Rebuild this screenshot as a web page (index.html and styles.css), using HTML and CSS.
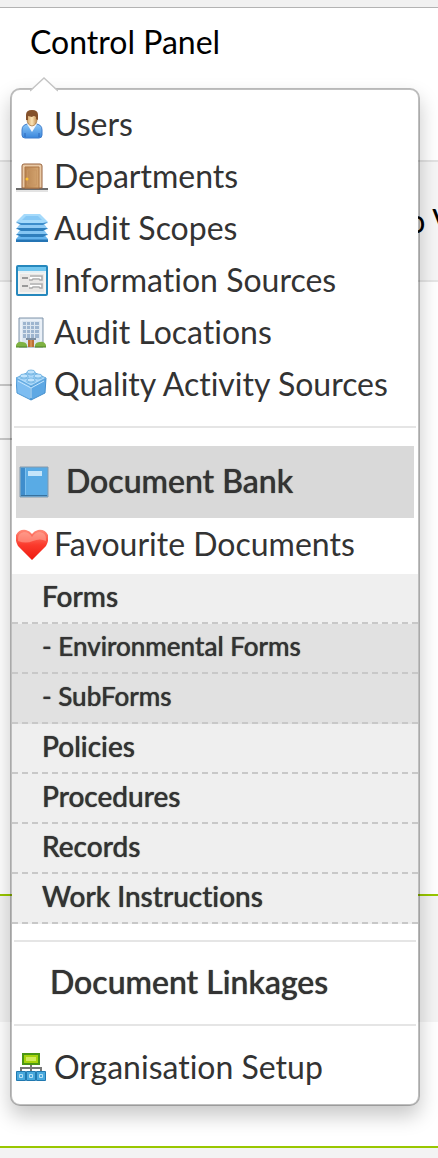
FILE: index.html
```html
<!DOCTYPE html>
<html lang="en">
<head>
  <meta charset="UTF-8">
  <meta name="viewport" content="width=device-width, initial-scale=1.0">
  <title>Control Panel</title>
  <link rel="stylesheet" href="styles.css">
</head>
<body>
  <div class="topbar"></div>
  <header class="navbar">
    <div class="dropdown">
      <a class="nav-link" href="#">Control Panel</a>
      <nav class="menu">
        <svg class="caret" viewBox="0 0 28 15"><path d="M0 14.500L14 1l14 13.500z" fill="#fff"/><path d="M0 14L14 1l14 13" fill="none" stroke="#c4c4c4" stroke-width="1.400"/></svg>
        <ul class="menu-group">
          <li><a class="item" href="#">
            <svg class="icon" viewBox="0 0 32 32">
              <defs>
                <linearGradient id="blue" x1="0" y1="0" x2="0" y2="1"><stop offset="0" stop-color="#8cc8f8"/><stop offset="1" stop-color="#3a86dc"/></linearGradient>
                <linearGradient id="wood" x1="0" y1="0" x2="1" y2="0"><stop offset="0" stop-color="#b98552"/><stop offset="1" stop-color="#d5a671"/></linearGradient>
                <linearGradient id="red" x1="0" y1="0" x2="0" y2="1"><stop offset="0" stop-color="#ff8a78"/><stop offset=".5" stop-color="#fb3a2c"/><stop offset="1" stop-color="#ee1a10"/></linearGradient>
                <linearGradient id="skin" x1="0" y1="0" x2="1" y2="0"><stop offset="0" stop-color="#d3a268"/><stop offset=".5" stop-color="#fbe3b4"/><stop offset="1" stop-color="#c08a4c"/></linearGradient>
              </defs>
              <path d="M6 26v-5q0-6 7-6h6q7 0 7 6v5q0 3-3 3H9q-3 0-3-3z" fill="url(#blue)" stroke="#3f7ccb"/>
              <path d="M9 28v-4M23 28v-4" stroke="#2c68bc" fill="none"/>
              <path d="M11 15h10l-5 8z" fill="#f6f8fc"/>
              <path d="M11 7q0-5 5-5t5 5v3q0 6-5 7-5-1-5-7z" fill="url(#skin)" stroke="#a87840" stroke-width=".8"/>
              <path d="M10 11V6q0-5 6-5t6 5v5l-2-1V8q-2-2-4 0l-4-1v4z" fill="#84512b"/>
            </svg>
            <span>Users</span></a></li>
          <li><a class="item" href="#">
            <svg class="icon" viewBox="0 0 32 32">
              <path d="M0 28h32" stroke="#6c6c6c" stroke-width="2"/>
              <path d="M0 30h32" stroke="#c8c8c8"/>
              <path d="M6 27V5q0-2 2-2h16q2 0 2 2v22z" fill="#e9c9a5" stroke="#98633d"/>
              <path d="M9 27V6h14v21z" fill="url(#wood)" stroke="#ad7747"/>
              <path d="M11.500 9h9v15h-9z" fill="none" stroke="#c89563" stroke-width=".8"/>
              <circle cx="11" cy="18" r="1.500" fill="#ffc330"/>
            </svg>
            <span>Departments</span></a></li>
          <li><a class="item" href="#">
            <svg class="icon" viewBox="0 0 32 32">
              <path d="M7 18h18l7 8v2H0v-2z" fill="#65b4ed"/><path d="M0 26.500h32V29H0z" fill="#2474b4"/>
              <path d="M4 17h24l4 5-4 1H4l-4-1z" fill="#84c5f2"/><path d="M0 21h32l-5 3H5z" fill="#2f7fbd"/>
              <path d="M4 11h24l4 5-4 1H4l-4-1z" fill="#90cbf5"/><path d="M0 15h32l-5 3H5z" fill="#2f7fbd"/>
              <path d="M4 8h24l4 2-4 1H4l-4-1z" fill="#98d0f7"/><path d="M0 9h32l-5 3H5z" fill="#3d8dcb"/>
              <path d="M8 1h16l8 8-5 1H5L0 9z" fill="#a5dafb"/><path d="M10 3h12l4 4H6z" fill="#86c8f5"/>
            </svg>
            <span>Audit Scopes</span></a></li>
          <li><a class="item" href="#">
            <svg class="icon" viewBox="0 0 32 32">
              <rect x="1" y="1" width="30" height="29" rx="1" fill="#f4f4f2" stroke="#2688bd" stroke-width="2"/>
              <path d="M2 2h28v4H2z" fill="#73c7ef"/><path d="M3 7h26" stroke="#d4edf8"/>
              <path d="M4 9h24v18H4z" fill="#e9e7e5"/>
              <path d="M6 13h6M6 21h6" stroke="#999" stroke-width="2"/>
              <path d="M14 10h12v5H14zM14 18h12v5H14z" fill="#fff"/><path d="M13 15h3l1-1h6l1 1h2v-4H14M13 23h3l1-1h6l1 1h2v-4H14" fill="none" stroke="#aaa" stroke-width="1.500"/>
            </svg>
            <span>Information Sources</span></a></li>
          <li><a class="item" href="#">
            <svg class="icon" viewBox="0 0 32 32">
              <path d="M3 30V1h24v29z" fill="#dce6f0" stroke="#8195aa"/><path d="M5 29V3h20v26" fill="none" stroke="#f7faff"/>
              <path d="M7 5h16v16H7z" fill="#9eb5cf"/>
              <path d="M7 8.500h16M7 12.500h16M7 16.500h16M10.500 5v16M14.500 5v16M18.500 5v16" stroke="#dce6f0"/>
              <path d="M10 21h10v2H10z" fill="#7f90a2"/><path d="M12 23h6v7h-6z" fill="#bc7035"/><path d="M15 23v7" stroke="#e9ab70"/>
              <path d="M0 30v-2q2-4 6-3 4 0 5 3v2zM30 30v-2q-2-4-6-3-4 0-5 3v2z" fill="#7fb243"/><path d="M0 30h11M19 30h11" stroke="#4c8424"/>
            </svg>
            <span>Audit Locations</span></a></li>
          <li><a class="item" href="#">
            <svg class="icon" viewBox="0 0 32 32">
              <path d="M0 9l15 8v14L1 24z" fill="#7dbdf1" stroke="#4e98d3"/><path d="M30 9l-15 8v14l14-7z" fill="#5ea8e4" stroke="#4790cd"/>
              <path d="M0 9l15-7 15 7-15 8z" fill="#add9fa" stroke="#65abdf"/>
              <g fill="#bfe3fc" stroke="#6aaee0" stroke-width=".8"><path d="M11 3v2q4 2 8 0V3"/><ellipse cx="15" cy="3" rx="4" ry="2"/><path d="M4 7v2q4 2 8 0V7"/><ellipse cx="8" cy="7" rx="4" ry="2"/><path d="M18 7v2q4 2 8 0V7"/><ellipse cx="22" cy="7" rx="4" ry="2"/><path d="M11 11v2q4 2 8 0v-2"/><ellipse cx="15" cy="11" rx="4" ry="2"/></g>
              <path d="M2 12l13 7v10M28 12l-13 7" fill="none" stroke="#c5e6fd"/>
            </svg>
            <span>Quality Activity Sources</span></a></li>
        </ul>
        <hr class="divider">
        <a class="bank" href="#">
          <svg class="icon" viewBox="0 0 32 32">
            <path d="M1 1h28v30H1z" fill="#59abe5" stroke="#8499ab"/><path d="M2 2h4v28H2z" fill="#3f8dcc"/><path d="M6.500 2v28" stroke="#7cc0ef"/>
            <path d="M9 5h14v5H9z" fill="#c5e5fa"/><path d="M2 29.500h26" stroke="#37729f"/>
          </svg>
          <span>Document Bank</span></a>
        <a class="item favourites" href="#">
          <svg class="icon" viewBox="0 0 32 32">
            <path d="M16 31L2 17Q-1 12 0 6 3 0 10 1q4 1 6 4 2-3 6-4 7-1 10 5 1 6-2 11z" fill="url(#red)"/>
            <path d="M2 12Q1 4 8 3q5 0 8 5 3-5 8-5 7 1 6 9-6-3-13 0-7 3-15 0z" fill="#ffb2a2" opacity=".5"/>
          </svg>
          <span>Favourite Documents</span></a>
        <ul class="folders">
          <li><a href="#">Forms</a></li>
          <li class="sub"><a href="#">- Environmental Forms</a></li>
          <li class="sub"><a href="#">- SubForms</a></li>
          <li><a href="#">Policies</a></li>
          <li><a href="#">Procedures</a></li>
          <li><a href="#">Records</a></li>
          <li><a href="#">Work Instructions</a></li>
        </ul>
        <hr class="divider">
        <a class="linkages" href="#">Document Linkages</a>
        <hr class="divider">
        <a class="item setup" href="#">
          <svg class="icon" viewBox="0 0 32 32">
            <path d="M15 12v8M5 20v-4h20v4" fill="none" stroke="#777" stroke-width="2"/>
            <path d="M7 2h16v10H7z" fill="#a6d40c" stroke="#4b9614" stroke-width="2"/><path d="M10 5h10v4H10z" fill="#d1eb5a"/>
            <g fill="#48a8dc" stroke="#2179b0"><path d="M.500 19.500h9v9h-9zM10.500 19.500h9v9h-9zM20.500 19.500h9v9h-9z"/></g>
            <g fill="#4aa9de" stroke="#b5e0f6"><path d="M3.500 22.500h3v3h-3zM13.500 22.500h3v3h-3zM23.500 22.500h3v3h-3z"/></g>
          </svg>
          <span>Organisation Setup</span></a>
      </nav>
    </div>
  </header>
  <section class="toolbar"><span>o V</span></section>
  <main class="content">
    <div class="field"></div>
  </main>
  <section class="band"></section>
  <footer class="footer"></footer>
</body>
</html>
```

FILE: styles.css
```css
* {
  margin: 0;
  padding: 0;
  box-sizing: border-box;
}

body {
  font-family: Lato, "Liberation Sans", sans-serif;
  font-size: 32px;
  line-height: 36px;
  font-variant-ligatures: none;
  color: #333;
  background: #fff;
  min-height: 100vh;
  display: flex;
  flex-direction: column;
  overflow-x: hidden;
}

a {
  color: inherit;
  text-decoration: none;
}

ul {
  list-style: none;
}

/* page behind the menu */
.topbar {
  height: 8px;
  background: #f1f1f1;
  border-bottom: 1px solid #b3b3b3;
}

.navbar {
  height: 152px;
  padding: 16px 30px;
}

.nav-link {
  color: #000;
}

.toolbar {
  height: 122px;
  display: flex;
  align-items: center;
  justify-content: flex-end;
  overflow: hidden;
  color: #000;
  background: #f6f6f6;
  border-top: 2px solid #e2e2e2;
  border-bottom: 2px solid #e6e6e6;
}

.toolbar span {
  margin-right: -16px;
}

.content {
  height: 612px;
  padding-top: 102px;
}

.field {
  width: 20px;
  height: 56px;
  border-top: 2px solid #ccc;
  border-bottom: 2px solid #ccc;
}

.band {
  height: 128px;
  background: #f4f4f4;
  border-top: 2px solid #99c700;
}

.footer {
  flex: 1;
  margin-top: 124px;
  background: #f3f3f3;
  border-top: 2px solid #99c700;
}

/* dropdown menu */
.menu {
  position: absolute;
  top: 88px;
  left: 10px;
  right: 18px;
  padding: 9px 0 10px;
  background: #fff;
  background-clip: padding-box;
  border: 2px solid rgba(0, 0, 0, 0.25);
  border-radius: 10px;
  box-shadow: 0 10px 20px rgba(0, 0, 0, 0.22);
}

.caret {
  position: absolute;
  top: -13px;
  left: 18px;
  width: 28px;
  height: 15px;
}

.item {
  display: flex;
  align-items: center;
  gap: 6px;
  height: 52px;
  padding-left: 4px;
  white-space: nowrap;
}

.item span,
.bank span {
  padding-bottom: 3px;
}

.icon {
  width: 32px;
  height: 32px;
  flex: none;
}

.divider {
  height: 2px;
  border: 0;
  margin: 0 2px;
  background: #e5e5e5;
}

.menu-group {
  padding-bottom: 15px;
}

.bank,
.folders,
.linkages {
  font-weight: 500;
  text-shadow: 0 0 1px #333;
}

.bank {
  display: flex;
  align-items: center;
  gap: 15px;
  height: 72px;
  margin: 18px 4px 0;
  padding-left: 3px;
  background: #d9d9d9;
}

.favourites {
  height: 54px;
  margin-bottom: 2px;
}

.folders {
  margin-bottom: 16px;
  font-size: 28px;
  background: #efefef;
}

.folders li {
  height: 50px;
  padding: 4px 30px;
  border-bottom: 2px dashed #c8c8c8;
}

.folders .sub {
  font-size: 26px;
  background: #e1e1e1;
}

.linkages {
  display: block;
  padding: 22px 38px 24px;
}

.setup {
  margin-top: 16px;
}
```
